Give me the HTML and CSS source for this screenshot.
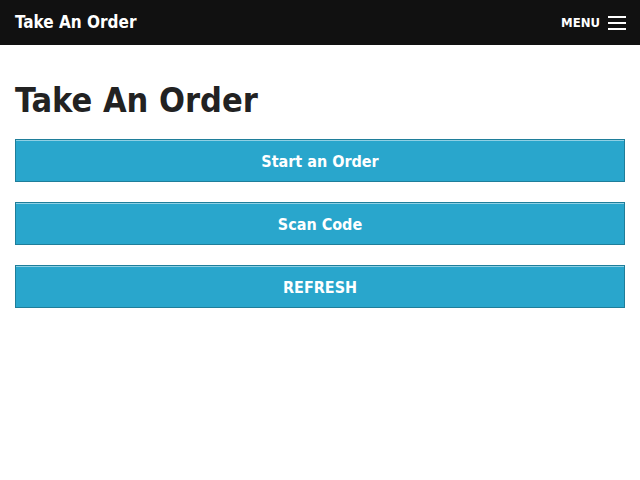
FILE: index.html
```html
<!DOCTYPE html>
<html lang="en">
<head>
<meta charset="utf-8">
<title>Take An Order</title>
<link rel="stylesheet" href="styles.css">
</head>
<body>
<header class="topbar">
  <div class="brand">Take An Order</div>
  <button class="menu-toggle" type="button">
    <span class="menu-label">MENU</span>
    <svg class="burger" width="18" height="14" viewBox="0 0 18 14" aria-hidden="true">
      <rect x="0" y="0" width="18" height="2" fill="#fff"/>
      <rect x="0" y="6" width="18" height="2" fill="#fff"/>
      <rect x="0" y="12" width="18" height="2" fill="#fff"/>
    </svg>
  </button>
</header>
<main class="content">
  <h1 class="page-title">Take An Order</h1>
  <div class="actions">
    <button class="action-btn" type="button">Start an Order</button>
    <button class="action-btn" type="button">Scan Code</button>
    <button class="action-btn" type="button">REFRESH</button>
  </div>
</main>
</body>
</html>
```

FILE: styles.css
```css
* { box-sizing: border-box; }
html, body {
  margin: 0;
  padding: 0;
  background: #fff;
  font-family: "DejaVu Sans Condensed", "DejaVu Sans", "Liberation Sans", sans-serif;
  font-stretch: condensed;
}
.topbar {
  height: 45px;
  background: #111111;
  color: #fff;
  display: flex;
  align-items: center;
  justify-content: space-between;
  padding: 0 14px 0 15px;
}
.brand {
  font-weight: bold;
  font-size: 17px;
  line-height: 20px;
  padding-bottom: 1px;
}
.menu-toggle {
  background: none;
  border: 0;
  padding: 0;
  color: #fff;
  display: flex;
  align-items: center;
  gap: 8px;
  cursor: pointer;
  font-family: inherit;
  font-stretch: condensed;
}
.menu-label {
  font-size: 13px;
  font-weight: bold;
  line-height: 14px;
}
.burger { display: block; }
.content {
  padding: 0 15px;
}
.page-title {
  margin: 36px 0 20px;
  font-size: 34px;
  line-height: 38px;
  font-weight: bold;
  color: #222;
}
.actions {
  display: flex;
  flex-direction: column;
  gap: 20px;
}
.action-btn {
  height: 43px;
  width: 100%;
  background: #29a6cc;
  border: 1px solid #1f7e9a;
  box-shadow: inset 0 1px 0 #8fd0e4;
  color: #fff;
  font-family: inherit;
  font-stretch: condensed;
  font-size: 16px;
  font-weight: bold;
  padding: 2px 0 0;
  cursor: pointer;
}
```
